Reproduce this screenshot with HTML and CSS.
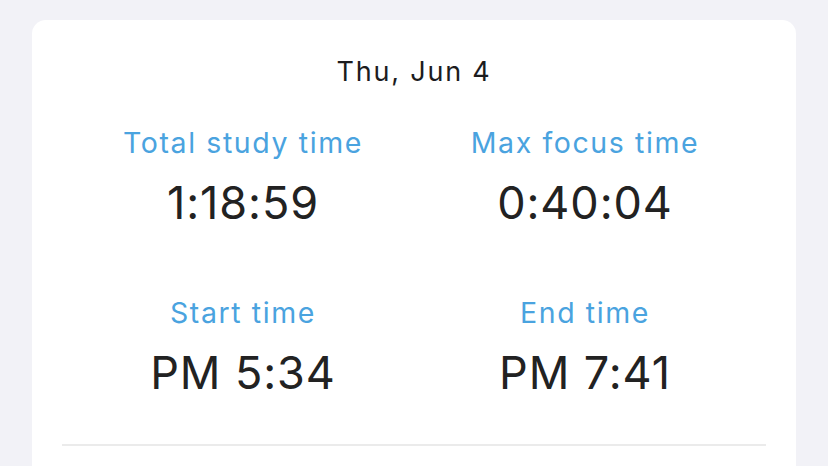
FILE: index.html
```html
<!DOCTYPE html>
<html>
<head>
<meta charset="utf-8">
<link rel="stylesheet" href="styles.css">
</head>
<body>
<div class="card">
  <div class="date">Thu, Jun 4</div>
  <div class="stats">
    <div class="stat">
      <div class="label">Total study time</div>
      <div class="value">1:18:59</div>
    </div>
    <div class="stat">
      <div class="label">Max focus time</div>
      <div class="value">0:40:04</div>
    </div>
    <div class="stat">
      <div class="label">Start time</div>
      <div class="value">PM 5:34</div>
    </div>
    <div class="stat">
      <div class="label">End time</div>
      <div class="value">PM 7:41</div>
    </div>
  </div>
  <div class="divider"></div>
</div>
</body>
</html>
```
FILE: styles.css
```css
html, body {
  margin: 0;
  padding: 0;
  background: #f2f2f7;
  font-family: Inter, "Noto Sans", sans-serif;
  overflow: hidden;
}
body {
  padding: 20px 32px 0 32px;
  height: 466px;
  box-sizing: border-box;
}
.card {
  background: #ffffff;
  border-radius: 14px 14px 0 0;
  padding: 36px 30px 0 30px;
  height: 600px;
}
.date {
  text-align: center;
  font-size: 27px;
  line-height: 32px;
  letter-spacing: 1.8px;
  color: #1c1c1e;
}
.stats {
  display: grid;
  grid-template-columns: 1fr 1fr;
  row-gap: 66px;
  margin: 38px 10px 0 10px;
}
.stat {
  text-align: center;
}
.label {
  font-size: 28.5px;
  line-height: 34px;
  letter-spacing: 1.6px;
  color: #4aa3df;
}
.value {
  margin-top: 16px;
  font-size: 45px;
  line-height: 54px;
  letter-spacing: 0.9px;
  color: #222222;
}
.divider {
  margin-top: 44px;
  height: 2px;
  background: #ebebeb;
}
```
